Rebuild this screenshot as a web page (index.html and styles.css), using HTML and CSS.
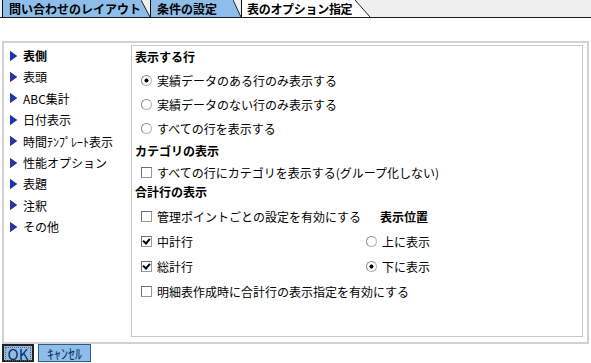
FILE: index.html
```html
<!DOCTYPE html>
<html lang="ja">
<head>
    <meta charset="UTF-8">
    <title>表のオプション指定</title>
    <link rel="stylesheet" href="styles.css">
</head>
<body>
    <div class="tabbar">
        <div class="tab tab-first">
            <span class="tab-body">問い合わせのレイアウト</span>
            <svg class="tab-slant" width="9" height="17" viewBox="0 0 9 17"><polygon points="0,0 9,17 0,17" fill="#8dbde8"/><line x1="0" y1="0" x2="9" y2="17" stroke="#222" stroke-width="1"/></svg>
        </div>
        <div class="tab tab-second">
            <span class="tab-body">条件の設定</span>
            <svg class="tab-slant" width="8" height="17" viewBox="0 0 8 17"><polygon points="0,0 8,17 0,17" fill="#8dbde8"/><line x1="0" y1="0" x2="8" y2="17" stroke="#222" stroke-width="1"/></svg>
        </div>
        <div class="tab tab-active">
            <span class="tab-body">表のオプション指定</span>
            <svg class="tab-slant" width="15" height="17" viewBox="0 0 15 17"><polygon points="0,0 15,17 0,17" fill="#fff"/><line x1="0" y1="0" x2="15" y2="17" stroke="#222" stroke-width="1"/></svg>
        </div>
    </div>

    <div class="frame">
        <ul class="menu">
            <li class="menu-item selected"><span class="arrow"></span>表側</li>
            <li class="menu-item"><span class="arrow"></span>表頭</li>
            <li class="menu-item"><span class="arrow"></span>ABC集計</li>
            <li class="menu-item"><span class="arrow"></span>日付表示</li>
            <li class="menu-item"><span class="arrow"></span>時間ﾃﾝﾌﾟﾚｰﾄ表示</li>
            <li class="menu-item"><span class="arrow"></span>性能オプション</li>
            <li class="menu-item"><span class="arrow"></span>表題</li>
            <li class="menu-item"><span class="arrow"></span>注釈</li>
            <li class="menu-item"><span class="arrow"></span>その他</li>
        </ul>

        <div class="panel">
            <div class="title">表示する行</div>
            <div class="opt"><span class="radio checked"></span>実績データのある行のみ表示する</div>
            <div class="opt"><span class="radio"></span>実績データのない行のみ表示する</div>
            <div class="opt"><span class="radio"></span>すべての行を表示する</div>

            <div class="title">カテゴリの表示</div>
            <div class="opt opt-tight"><span class="check"></span>すべての行にカテゴリを表示する(グループ化しない)</div>

            <div class="title title-tight">合計行の表示</div>
            <div class="totals">
                <div class="opt opt-grid"><span class="check"></span>管理ポイントごとの設定を有効にする</div>
                <div class="opt opt-grid sub-title">表示位置</div>
                <div class="opt opt-grid"><span class="check checked"></span>中計行</div>
                <div class="opt opt-grid sub-opt"><span class="radio"></span>上に表示</div>
                <div class="opt opt-grid"><span class="check checked"></span>総計行</div>
                <div class="opt opt-grid sub-opt"><span class="radio checked"></span>下に表示</div>
                <div class="opt opt-grid span-all"><span class="check"></span>明細表作成時に合計行の表示指定を有効にする</div>
            </div>
        </div>
    </div>

    <div class="buttons">
        <button class="btn btn-ok" type="button"><span class="focus">OK</span></button>
        <button class="btn btn-cancel" type="button">ｷｬﾝｾﾙ</button>
    </div>
</body>
</html>
```

FILE: styles.css
```css
body {
    margin: 0;
    font-family: "Noto Sans CJK JP", "Noto Sans", sans-serif;
    font-size: 12px;
    color: #000;
    background-color: #fff;
    width: 591px;
}

/* tab strip */
.tabbar {
    height: 17px;
    background-color: #efefef;
    border-bottom: 1px solid #1a1a1a;
    display: flex;
    padding-left: 2px;
}

.tab {
    display: flex;
    height: 17px;
}

.tab-body {
    border-left: 1px solid #111;
    background-color: #8dbde8;
    font-weight: bold;
    font-size: 12px;
    line-height: 17px;
    padding-left: 5px;
    box-sizing: border-box;
    white-space: nowrap;
}

.tab-first .tab-body { width: 139px; padding-left: 6px; }
.tab-second .tab-body { width: 83px; padding-left: 6px; }
.tab-active .tab-body { width: 114px; background-color: #fff; letter-spacing: -0.3px; }

.tab-slant {
    display: block;
}

/* main frame */
.frame {
    margin: 23px 0 0 2px;
    width: 587px;
    height: 303px;
    box-sizing: border-box;
    border: 2px solid #d2d2d2;
    display: flex;
    padding: 2px 4px 5px 0;
}

.menu {
    list-style: none;
    margin: 0;
    padding: 0;
    width: 127px;
}

.menu-item {
    height: 21.4px;
    line-height: 21.4px;
    display: flex;
    align-items: center;
    padding-left: 6px;
    white-space: nowrap;
}

.menu-item.selected {
    font-weight: bold;
}

.arrow {
    width: 0;
    height: 0;
    border-top: 5.5px solid transparent;
    border-bottom: 5.5px solid transparent;
    border-left: 7px solid #2338a8;
    margin-right: 6px;
    filter: drop-shadow(0 0 0.3px #0d1a70);
}

.panel {
    flex: 1;
    border: 1px solid #c8c8c8;
    padding-left: 3px;
}

.title {
    height: 22px;
    line-height: 22px;
    font-weight: bold;
}

.title-tight {
    height: 20px;
    line-height: 20px;
}

.opt {
    height: 24px;
    display: flex;
    align-items: center;
    padding-left: 6px;
    white-space: nowrap;
}

.opt-tight {
    height: 20px;
}

.opt-grid {
    height: 25px;
}

.totals {
    margin-top: 2px;
    display: grid;
    grid-template-columns: 231px 1fr;
}

.span-all {
    grid-column: 1 / 3;
}

.sub-title {
    font-weight: bold;
    padding-left: 14px;
}

.sub-opt {
    padding-left: 0;
}

/* radio and checkbox marks */
.radio {
    width: 11px;
    height: 11px;
    box-sizing: border-box;
    border-radius: 50%;
    border: 1px solid #b4b4b4;
    border-top-color: #8a8a8a;
    border-left-color: #8a8a8a;
    background-color: #fff;
    margin-right: 5px;
    flex: none;
}

.radio.checked {
    background: radial-gradient(circle, #000 0, #000 1.8px, #fff 2.3px);
}

.check {
    width: 11px;
    height: 11px;
    box-sizing: border-box;
    border: 1px solid #9a9a9a;
    border-top-color: #6f6f6f;
    border-left-color: #6f6f6f;
    background-color: #fff;
    margin-right: 5px;
    flex: none;
    position: relative;
}

.check.checked::after {
    content: "";
    position: absolute;
    left: 2px;
    top: 0;
    width: 3px;
    height: 5px;
    border-right: 2px solid #000;
    border-bottom: 2px solid #000;
    transform: rotate(40deg);
}

/* buttons */
.buttons {
    display: flex;
    gap: 4px;
    padding-left: 2px;
}

.btn {
    height: 18px;
    margin: 0;
    padding: 0;
    font-family: "Noto Sans CJK JP", "Noto Sans", sans-serif;
    font-size: 13px;
    line-height: 16px;
    color: #0b2e5e;
    background-color: #8dbde8;
    border: 1px solid #2d5a8c;
    white-space: nowrap;
}

.btn-ok {
    width: 32px;
    border: 2px solid #17222e;
    padding: 1px;
    font-size: 15px;
}

.btn-cancel {
    width: 53px;
    font-size: 14px;
}

.focus {
    display: block;
    border: 1px dotted #a0521e;
    line-height: 12px;
}
```
